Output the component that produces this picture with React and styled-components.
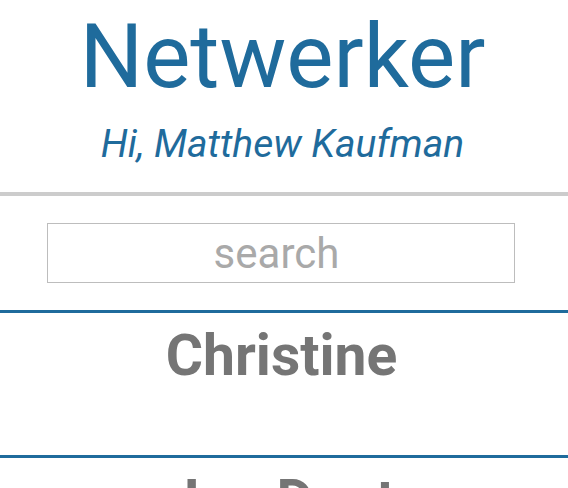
import React from 'react'
import styled, { createGlobalStyle } from 'styled-components'

const GlobalStyle = createGlobalStyle`
  body {
    margin: 0;
    background: #fff;
    font-family: Roboto, "Liberation Sans", sans-serif;
  }
`

const Header = styled.header`
  display: flex;
  flex-direction: column;
  align-items: center;
  padding: 12px 3px 28px 0;
  border-bottom: 4px solid #cccccc;
`

const Titulo = styled.h1`
  margin: 0;
  font-size: 89px;
  font-weight: 400;
  line-height: 1;
  color: #1f6b9c;
`

const Saudacao = styled.h2`
  margin: 24px 0 0 0;
  font-size: 39px;
  font-weight: 400;
  font-style: italic;
  line-height: 1;
  color: #1f6b9c;
`

const BuscaWrap = styled.div`
  display: flex;
  justify-content: center;
  padding: 27px 6px 27px 0;
`

const Busca = styled.input`
  width: 468px;
  height: 60px;
  box-sizing: border-box;
  border: 1px solid #bdbdbd;
  border-radius: 0;
  outline: none;
  padding: 0 10px 0 1px;
  font-family: Roboto, "Liberation Sans", sans-serif;
  font-size: 42px;
  text-align: center;
  color: #555;
  &::placeholder {
    color: #a9a9a9;
  }
`

const Lista = styled.ul`
  list-style: none;
  margin: 0;
  padding: 0;
  border-top: 3px solid #1f6b9c;
`

const Contato = styled.li`
  padding: 14px 5px 71px 0;
  border-bottom: 3px solid #1f6b9c;
  text-align: center;
`

const Nome = styled.span`
  display: block;
  font-size: 57px;
  font-weight: 700;
  line-height: 1;
  color: #757575;
`

const contatos = ['Christine', 'Joe Dent', 'Maria Lopez']

export default function App() {
  return (
    <div>
      <GlobalStyle />
      <Header>
        <Titulo>Netwerker</Titulo>
        <Saudacao>Hi, Matthew Kaufman</Saudacao>
      </Header>
      <BuscaWrap>
        <Busca type="text" placeholder="search" />
      </BuscaWrap>
      <Lista>
        {contatos.map(nome => (
          <Contato key={nome}>
            <Nome>{nome}</Nome>
          </Contato>
        ))}
      </Lista>
    </div>
  )
}
